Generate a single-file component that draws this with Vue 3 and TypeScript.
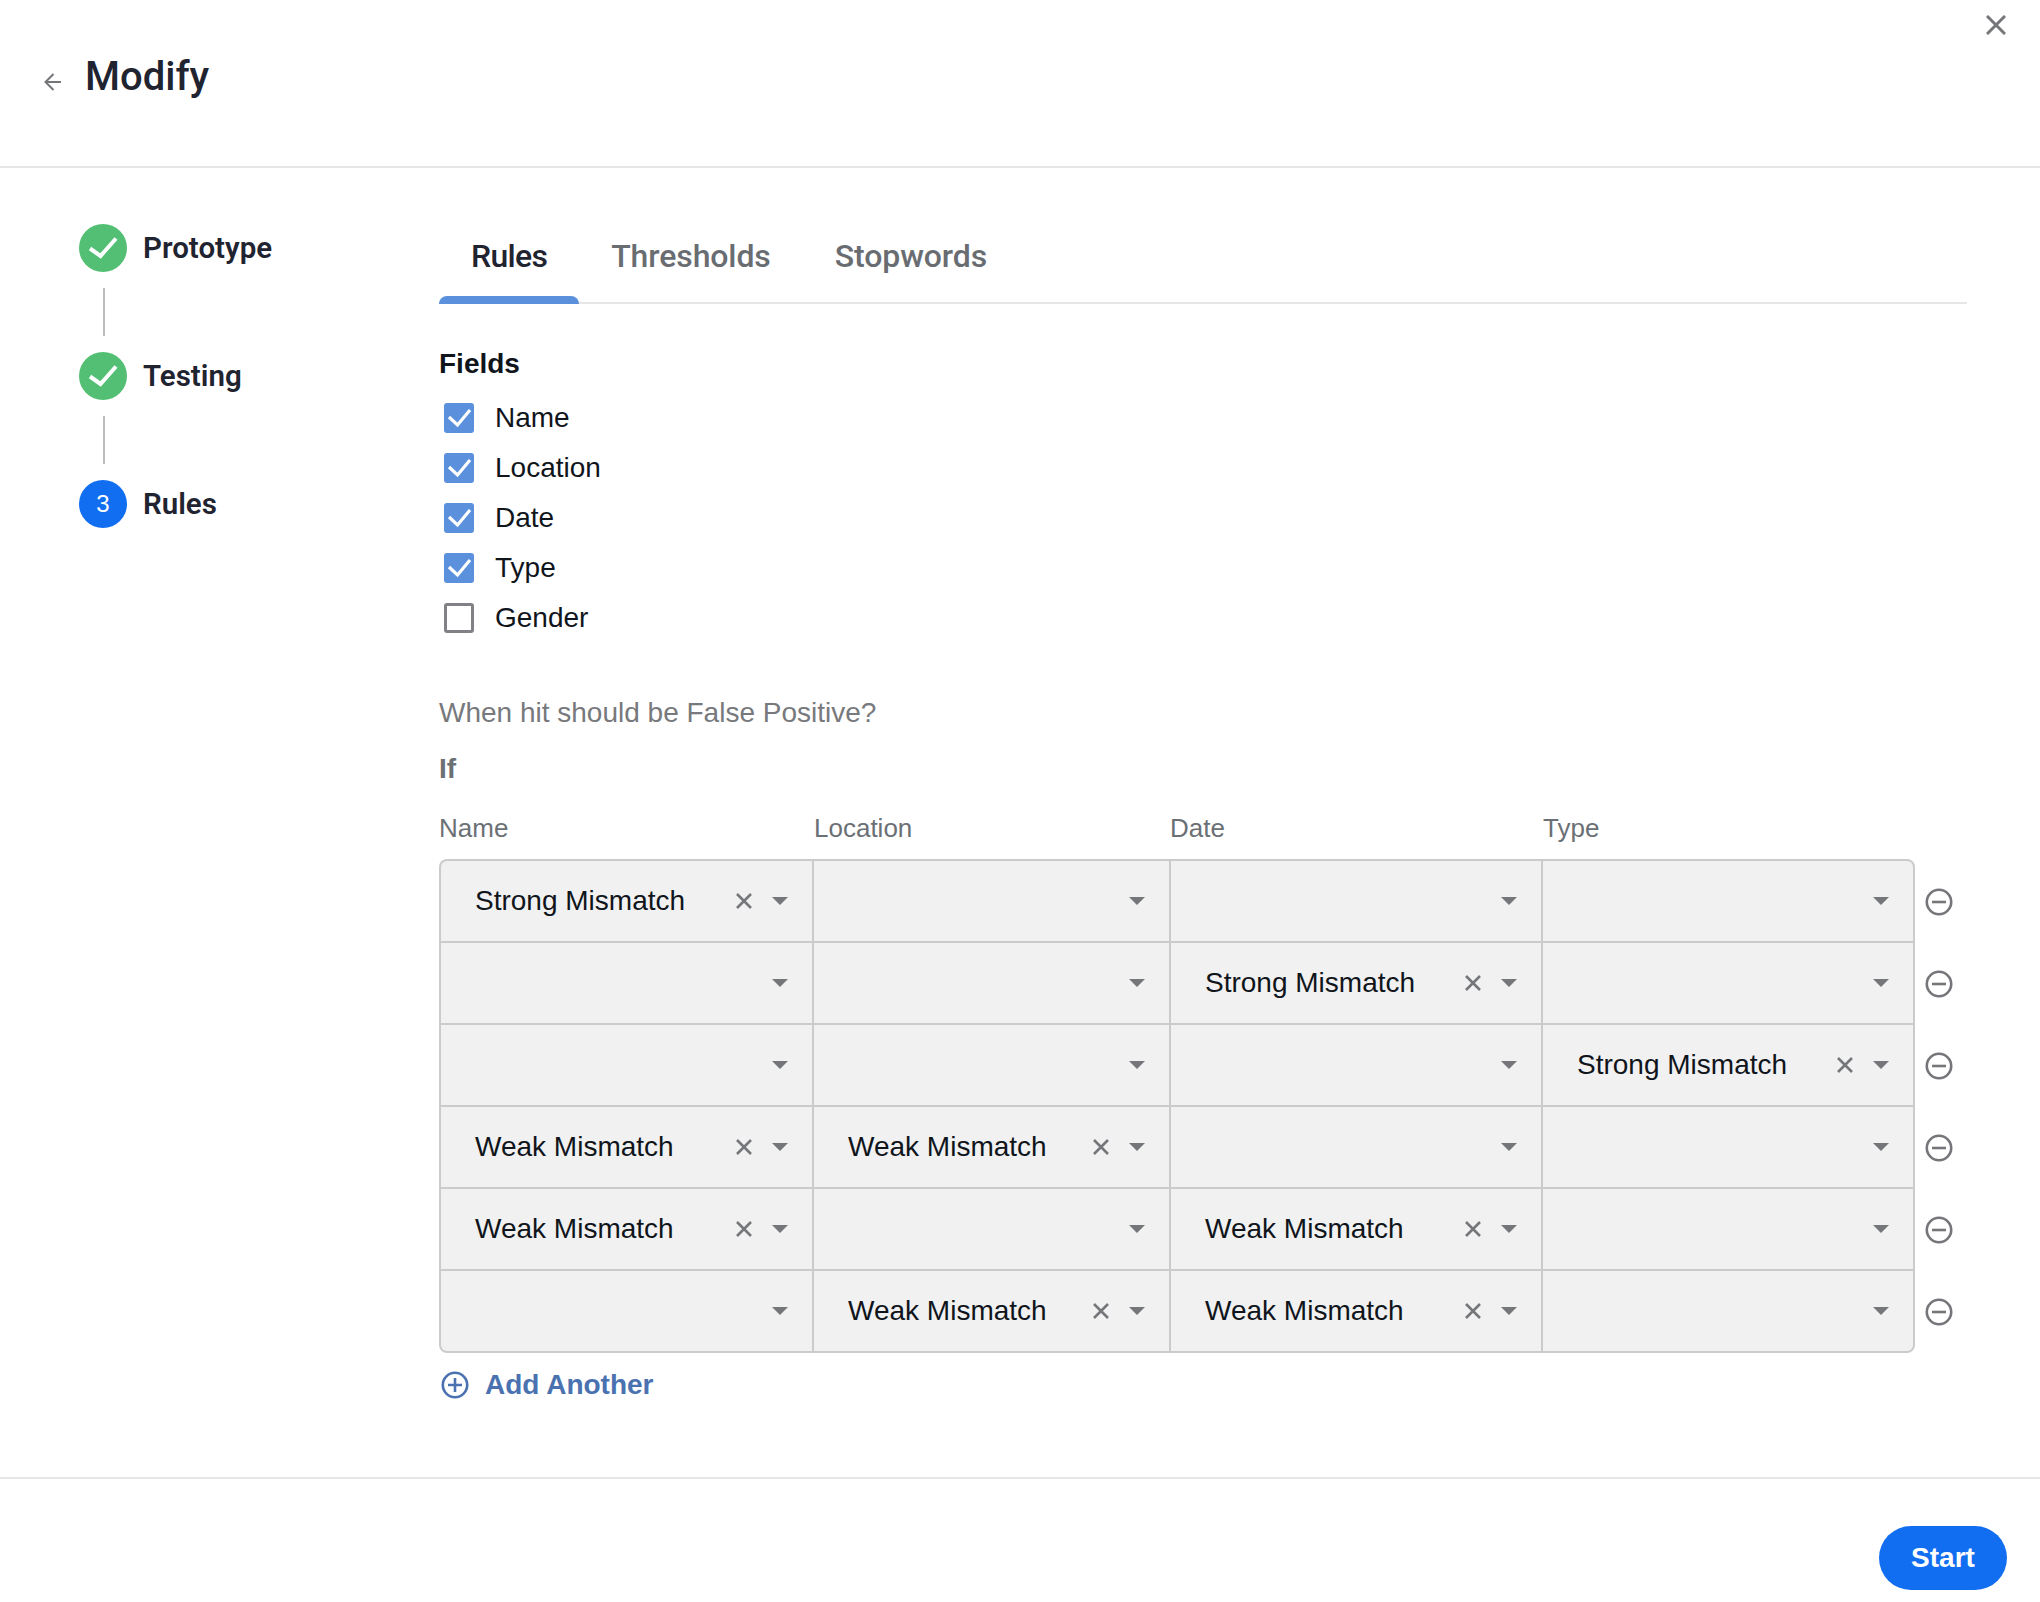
<script setup lang="ts">
interface Step {
  label: string
  done: boolean
}

const steps: Step[] = [
  { label: 'Prototype', done: true },
  { label: 'Testing', done: true },
  { label: 'Rules', done: false }
]

const tabs = ['Rules', 'Thresholds', 'Stopwords']

const fields = [
  { label: 'Name', checked: true },
  { label: 'Location', checked: true },
  { label: 'Date', checked: true },
  { label: 'Type', checked: true },
  { label: 'Gender', checked: false }
]

const columns = ['Name', 'Location', 'Date', 'Type']

const S = 'Strong Mismatch'
const W = 'Weak Mismatch'

const rows: string[][] = [
  [S, '', '', ''],
  ['', '', S, ''],
  ['', '', '', S],
  [W, W, '', ''],
  [W, '', W, ''],
  ['', W, W, '']
]
</script>

<template>
  <div class="page">
    <header class="top">
      <svg class="back" width="17" height="18" viewBox="0 0 17 18" fill="none" stroke="currentColor" stroke-width="2">
        <path d="M17 9H1.5" />
        <path d="M9.5 1L1.5 9l8 8" />
      </svg>
      <h1 class="title">Modify</h1>
      <svg class="close" width="20" height="20" viewBox="0 0 20 20" fill="none" stroke="currentColor" stroke-width="3">
        <path d="M1 1l18 18M19 1L1 19" />
      </svg>
    </header>

    <main class="main">
      <aside class="steps">
        <template v-for="(step, i) in steps" :key="step.label">
          <div v-if="i > 0" class="connector"></div>
          <div class="step">
            <span class="bubble" :class="{ done: step.done }">
              <svg v-if="step.done" width="48" height="48" viewBox="0 0 48 48" fill="none" stroke="#fff" stroke-width="4">
                <path d="M11 24.5l10.5 7.5L37 14.5" />
              </svg>
              <template v-else>{{ i + 1 }}</template>
            </span>
            <span class="step-label">{{ step.label }}</span>
          </div>
        </template>
      </aside>

      <section class="content">
        <nav class="tabs">
          <div v-for="(tab, i) in tabs" :key="tab" class="tab" :class="{ active: i === 0 }">{{ tab }}</div>
        </nav>

        <h2 class="fields-title">Fields</h2>
        <div class="fields">
          <label v-for="field in fields" :key="field.label" class="field">
            <span class="box" :class="{ checked: field.checked }">
              <svg v-if="field.checked" width="30" height="30" viewBox="0 0 30 30" fill="none" stroke="#fff" stroke-width="3.2">
                <path d="M5 14l8.5 8L26 7" />
              </svg>
            </span>
            {{ field.label }}
          </label>
        </div>

        <p class="question">When hit should be False Positive?</p>
        <p class="if">If</p>

        <div class="col-heads">
          <span v-for="col in columns" :key="col">{{ col }}</span>
        </div>

        <div class="table-wrap">
          <div class="table">
            <template v-for="(row, r) in rows" :key="r">
              <div v-for="(value, c) in row" :key="c" class="cell">
                <span class="value">{{ value }}</span>
                <svg v-if="value" class="clear" width="16" height="16" viewBox="0 0 16 16" fill="none" stroke="currentColor" stroke-width="2.6">
                  <path d="M1 1l14 14M15 1L1 15" />
                </svg>
                <span class="caret"></span>
              </div>
            </template>
          </div>
          <div class="removes">
            <div v-for="(row, r) in rows" :key="r" class="remove">
              <svg width="28" height="28" viewBox="0 0 28 28" fill="none" stroke="currentColor" stroke-width="2.6">
                <circle cx="14" cy="14" r="12.2" />
                <path d="M7 14h14" />
              </svg>
            </div>
          </div>
        </div>

        <div class="add">
          <svg width="28" height="28" viewBox="0 0 28 28" fill="none" stroke="currentColor" stroke-width="2.6">
            <circle cx="14" cy="14" r="12.2" />
            <path d="M7 14h14M14 7v14" />
          </svg>
          <span>Add Another</span>
        </div>
      </section>
    </main>

    <footer class="bottom">
      <button class="start">Start</button>
    </footer>
  </div>
</template>

<style>
html,
body {
  margin: 0;
  background: #fff;
}
</style>

<style scoped>
.page {
  width: 2040px;
  height: 1602px;
  display: flex;
  flex-direction: column;
  font-family: "Liberation Sans", Arial, sans-serif;
  font-size: 28px;
  color: #10151c;
  overflow: hidden;
}

.top {
  position: relative;
  height: 166px;
  flex-shrink: 0;
  display: flex;
  align-items: flex-start;
  padding-left: 44px;
  border-bottom: 2px solid #e6e6e6;
}

.back {
  color: #75767a;
  margin-top: 73px;
}

.title {
  margin: 54px 0 0 24px;
  font-family: Roboto, sans-serif;
  font-size: 40px;
  line-height: 46px;
  font-weight: 500;
  color: #1f2430;
}

.close {
  position: absolute;
  top: 15px;
  right: 34px;
  color: #75767a;
}

.main {
  flex: 1;
  display: flex;
  min-height: 0;
}

.steps {
  width: 439px;
  flex-shrink: 0;
  box-sizing: border-box;
  padding: 56px 0 0 79px;
}

.step {
  display: flex;
  align-items: center;
  gap: 16px;
  height: 48px;
}

.bubble {
  width: 48px;
  height: 48px;
  border-radius: 50%;
  background: #126ef0;
  color: #fff;
  font-size: 24px;
  display: flex;
  align-items: center;
  justify-content: center;
}

.bubble.done {
  background: #52bf74;
}

.step-label {
  font-family: Roboto, sans-serif;
  font-size: 29.5px;
  line-height: 34px;
  font-weight: 600;
  color: #1f2430;
}

.connector {
  width: 2px;
  height: 48px;
  margin: 16px 0 16px 24px;
  background: #bdbdbd;
}

.content {
  flex: 1;
  padding: 56px 73px 0 0;
  min-width: 0;
}

.tabs {
  display: flex;
  border-bottom: 2px solid #e6e6e6;
  height: 78px;
}

.tab {
  position: relative;
  padding: 15px 32px 0;
  height: 80px;
  box-sizing: border-box;
  font-family: Roboto, sans-serif;
  font-size: 32px;
  line-height: 34px;
  font-weight: 500;
  letter-spacing: -0.1px;
  color: #696d72;
}

.tab.active {
  color: #1f2430;
  letter-spacing: -0.7px;
}

.tab.active::after {
  content: "";
  position: absolute;
  left: 0;
  right: 0;
  bottom: 0;
  height: 8px;
  background: #5a90dc;
  border-radius: 8px 8px 0 0;
}

.fields-title {
  margin: 44px 0 13px 0;
  font-size: 28px;
  line-height: 32px;
  font-weight: 700;
  color: #10151c;
}

.field {
  height: 50px;
  display: flex;
  align-items: center;
  gap: 21px;
  padding-left: 5px;
}

.box {
  width: 30px;
  height: 30px;
  box-sizing: border-box;
  border: 3px solid #808285;
  border-radius: 3px;
  background: #fff;
}

.box.checked {
  border: 0;
  background: #5a90dc;
}

.question {
  margin: 54px 0 0;
  line-height: 32px;
  color: #77797c;
}

.if {
  margin: 24px 0 0;
  line-height: 32px;
  font-weight: 700;
  color: #6b7075;
}

.col-heads {
  display: grid;
  grid-template-columns: 375px 356px 373px 373px;
  margin-top: 27px;
  font-size: 26px;
  line-height: 32px;
  color: #6b7075;
}

.table-wrap {
  display: flex;
  gap: 10px;
  margin-top: 15px;
}

.table {
  width: 1476px;
  box-sizing: border-box;
  display: grid;
  grid-template-columns: 371px 355px 370px 370px;
  grid-auto-rows: 80px;
  gap: 2px;
  padding: 2px;
  background: #cbcbcb;
  border-radius: 8px;
}

.cell {
  display: flex;
  align-items: center;
  padding: 0 24px 0 34px;
  background: #f1f1f1;
}

.cell:first-child {
  border-top-left-radius: 6px;
}

.cell:nth-child(4) {
  border-top-right-radius: 6px;
}

.cell:nth-last-child(4) {
  border-bottom-left-radius: 6px;
}

.cell:last-child {
  border-bottom-right-radius: 6px;
}

.value {
  flex: 1;
  white-space: nowrap;
}

.clear {
  color: #75767a;
  margin-right: 20px;
}

.caret {
  width: 0;
  height: 0;
  border-left: 8px solid transparent;
  border-right: 8px solid transparent;
  border-top: 8px solid #75767a;
}

.removes {
  padding-top: 2px;
}

.remove {
  height: 82px;
  display: flex;
  align-items: center;
  color: #75767a;
}

.add {
  display: flex;
  align-items: center;
  gap: 16px;
  margin-top: 16px;
  padding-left: 2px;
  height: 32px;
  font-weight: 700;
  color: #4a72b0;
}

.bottom {
  flex-shrink: 0;
  border-top: 2px solid #e6e6e6;
  display: flex;
  justify-content: flex-end;
  padding: 47px 33px 0 0;
  height: 76px;
}

.start {
  width: 128px;
  height: 64px;
  border: 0;
  border-radius: 32px;
  background: #126ef0;
  color: #fff;
  font-family: "Liberation Sans", Arial, sans-serif;
  font-size: 28px;
  font-weight: 700;
}
</style>
